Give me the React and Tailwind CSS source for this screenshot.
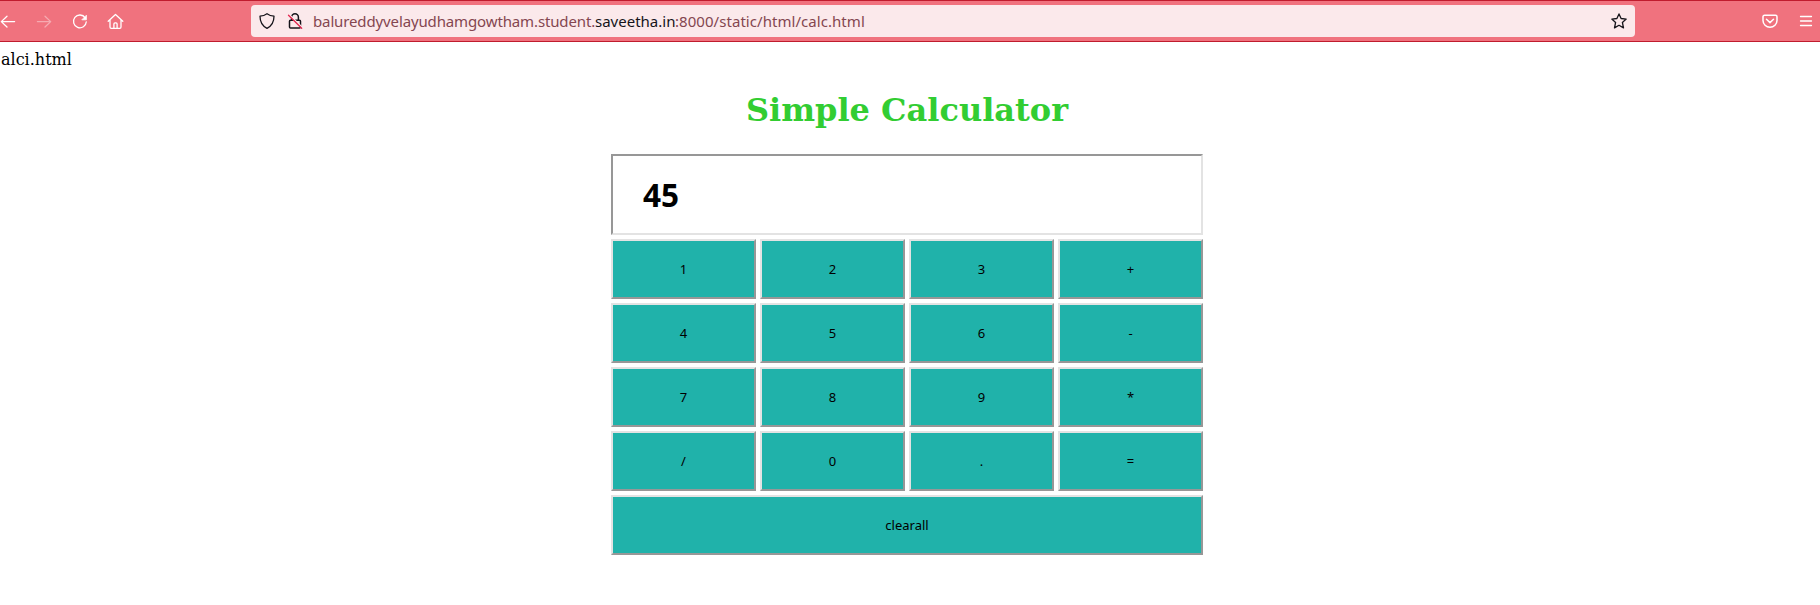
const KEYS = ['1', '2', '3', '+', '4', '5', '6', '-', '7', '8', '9', '*', '/', '0', '.', '='];

function Icon({ className, children }) {
  return (
    <svg
      viewBox="0 0 18 18"
      className={`size-[18px] shrink-0 ${className}`}
      fill="none"
      stroke="currentColor"
      strokeWidth="1.3"
      strokeLinecap="round"
      strokeLinejoin="round"
    >
      {children}
    </svg>
  );
}

function BrowserBar() {
  return (
    <header className="flex h-[42px] items-center border-y border-[#c01c2e] bg-[#f0727e] text-white">
      <Icon className="-ml-px">
        <path d="M15.6 9.6H2.6M8 4.2L2.3 9.6L8 15" />
      </Icon>
      <Icon className="ml-[18px] opacity-40">
        <path d="M2.4 9.6h13M10 4.2l5.7 5.4L10 15" />
      </Icon>
      <Icon className="ml-[18px]">
        <path d="M14.2 5.8A6.4 6.4 0 1 0 15.3 9.8" />
        <path d="M15.4 3.6v4.2h-4.2z" fill="currentColor" strokeWidth="0.8" />
      </Icon>
      <Icon className="ml-[18px]">
        <path d="M1.2 9.2L8.500 2.400l7.300 6.800M3 7.800v7.300q0 1.200 1.200 1.200h8.600q1.200 0 1.200-1.200V7.800M6.900 16.200v-4.200q0-1.100 1.100-1.100h1q1.100 0 1.100 1.100V16.200" />
      </Icon>
      <div className="ml-[126px] flex h-8 w-[1384px] shrink-0 items-center rounded-[4px] bg-[#fbe9eb] text-[#15141a]">
        <Icon className="ml-[7px]">
          <path d="M9 1.7C11 3.2 13.3 4 16 4.2C16 9.2 14.3 13.6 9 16.3C3.7 13.6 2 9.2 2 4.2C4.7 4 7 3.2 9 1.7Z" />
        </Icon>
        <Icon className="ml-[10px]">
          <path d="M5.6 8V5.2a3.4 3.4 0 0 1 6.8 0V8M4.5 8.3h9q1 0 1 1V15q0 1-1 1h-9Q3.5 16 3.5 15V9.3Q3.5 8.3 4.5 8.3Z" strokeWidth="1.5" />
          <path d="M3.2 2.6L16.4 15.6" stroke="#fbe9eb" strokeWidth="1.5" />
          <path d="M2.5 3.3L15.7 16.3" stroke="#e22850" />
        </Icon>
        <div className="ml-[9px] flex h-8 items-center font-['Noto_Sans',sans-serif] text-[15px] leading-[20px] whitespace-pre text-[#844650]">
          <span className="w-[282px] tracking-[-0.13px]">balureddyvelayudhamgowtham.student.</span>
          <span className="w-[80px] text-[#15141a]">saveetha.in</span>
          <span className="tracking-[0.05px]">:8000/static/html/calc.html</span>
        </div>
        <Icon className="mr-[7px] ml-auto">
          <path d="M9 1.9L11.1 6.5L16.2 7.1L12.4 10.5L13.5 15.9L9 13.3L4.5 15.9L5.6 10.5L1.8 7.1L6.9 6.5Z" />
        </Icon>
      </div>
      <Icon className="ml-[126px]">
        <path d="M3.5 3.3h11q1.5 0 1.5 1.5V8.5a7 6.7 0 0 1-14 0V4.8Q2 3.3 3.5 3.3ZM5.500 7.200L9 10.600L12.500 7.200" strokeWidth="1.5" />
      </Icon>
      <Icon className="ml-[18px]">
        <path d="M3.5 4.5h11M3.5 9h11M3.5 13.5h11" />
      </Icon>
    </header>
  );
}

function Key({ label, className = '' }) {
  return (
    <button
      className={`flex h-[60px] items-center justify-center border-2 border-t-[#e3e3e3] border-r-[#979797] border-b-[#979797] border-l-[#e3e3e3] bg-[#20b2aa] font-['Noto_Sans',sans-serif] text-[13px] leading-[18px] text-black ${className}`}
    >
      {label}
    </button>
  );
}

export default function App() {
  return (
    <div className="h-[605px] w-[1820px] overflow-hidden bg-white">
      <BrowserBar />
      <div className="mt-2 pl-px font-['DejaVu_Serif',serif] text-[16px] leading-[19px]">alci.html</div>
      <h1 className="mt-[22px] -ml-[6px] text-center font-['DejaVu_Serif',serif] text-[32px] leading-[38px] font-bold text-[#32cd32]">
        Simple Calculator
      </h1>
      <main className="mt-[25px] ml-[611px] grid w-[592px] grid-cols-4 gap-1">
        <div className="col-span-4 flex h-[81px] items-center border-2 border-t-[#979797] border-r-[#e3e3e3] border-b-[#e3e3e3] border-l-[#979797] pl-[30px] font-['Noto_Sans',sans-serif] text-[31.5px] leading-[42px] font-bold text-black">
          45
        </div>
        {KEYS.map((key) => (
          <Key key={key} label={key} />
        ))}
        <Key label="clearall" className="col-span-4" />
      </main>
    </div>
  );
}
